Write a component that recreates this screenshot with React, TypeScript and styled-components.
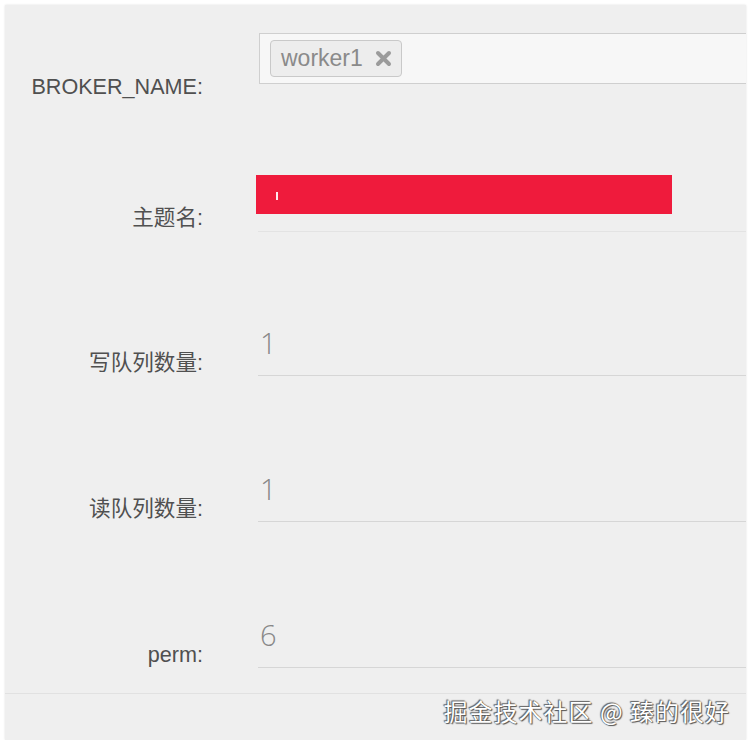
import React from "react";
import styled, { createGlobalStyle } from "styled-components";

const GlobalStyle = createGlobalStyle`
  html, body {
    margin: 0;
    padding: 0;
    background: #ffffff;
  }
  body {
    font-family: "Liberation Sans", "Noto Sans CJK SC", Arial, sans-serif;
  }
`;

const Panel = styled.div`
  margin: 5px 5px 0 5px;
  width: 741px;
  height: 735px;
  background: #efefef;
  box-shadow: 0 0 2px rgba(0, 0, 0, 0.12);
  display: flex;
  flex-direction: column;
  overflow: hidden;
`;

const Form = styled.div`
  display: flex;
  flex-direction: column;
`;

const Row = styled.div<{ $top: number; $align: "start" | "end" }>`
  display: flex;
  margin-top: ${({ $top }) => $top}px;
  align-items: ${({ $align }) => ($align === "start" ? "flex-start" : "flex-end")};
`;

const Label = styled.label<{ $offset: number; $fromTop?: boolean }>`
  flex: 0 0 253px;
  box-sizing: border-box;
  padding-right: 55px;
  text-align: right;
  font-size: 21.6px;
  line-height: 22px;
  color: #505050;
  ${({ $offset, $fromTop }) =>
    $fromTop ? `margin-top: ${$offset}px;` : `margin-bottom: ${$offset}px;`}
`;

const TagInput = styled.div`
  flex: 1;
  height: 51px;
  box-sizing: border-box;
  margin-left: 1px;
  border: 1px solid #cfcfcf;
  border-right: none;
  background: #f7f7f7;
  display: flex;
  align-items: center;
  padding-left: 10px;
`;

const Tag = styled.span`
  display: inline-flex;
  align-items: center;
  gap: 12px;
  height: 37px;
  box-sizing: border-box;
  padding: 0 9px 0 10px;
  border: 1px solid #c9c9c9;
  border-radius: 4px;
  background: #ededed;
  font-size: 23px;
  color: #8a8a8a;
`;

const TopicField = styled.div`
  flex: 1;
  height: 56px;
  border-bottom: 1px solid #e3e3e3;
`;

const Redacted = styled.div`
  width: 416px;
  height: 39px;
  margin-left: -2px;
  background: #ef1b3c;
  display: flex;
  align-items: center;
  padding-left: 20px;
  box-sizing: border-box;
`;

const Caret = styled.span`
  display: block;
  width: 2px;
  height: 8px;
  margin-top: 3px;
  background: #ffe8ec;
`;

const NumberField = styled.div`
  flex: 1;
  height: 53px;
  box-sizing: border-box;
  padding: 4px 0 0 2px;
  border-bottom: 1px solid #d6d6d6;
  font-family: "Open Sans", "Liberation Sans", sans-serif;
  font-weight: 300;
  font-size: 29px;
  line-height: 32px;
  color: #888888;
`;

const Footer = styled.div`
  margin-top: auto;
  height: 47px;
  box-sizing: border-box;
  border-top: 1px solid #e1e1e1;
  display: flex;
  justify-content: flex-end;
  align-items: flex-start;
  padding: 2px 16px 0 0;
`;

const Watermark = styled.span`
  font-family: "Noto Sans CJK SC", sans-serif;
  font-size: 24px;
  line-height: 30px;
  color: #ffffff;
  text-shadow: 0 0 1px #444, 1px 1px 1px #555, -1px -1px 1px #666;
  letter-spacing: 1px;
`;

const RemoveIcon = () => (
  <svg width="17" height="17" viewBox="0 0 17 17">
    <path
      d="M3 3 L14 14 M14 3 L3 14"
      stroke="#9b9b9b"
      strokeWidth="4"
      strokeLinecap="round"
    />
  </svg>
);

const numberRows = [
  { label: "写队列数量:", value: "1", top: 91 },
  { label: "读队列数量:", value: "1", top: 93 },
  { label: "perm:", value: "6", top: 93 },
];

export default function App() {
  return (
    <>
      <GlobalStyle />
      <Panel>
        <Form>
          <Row $top={28} $align="start">
            <Label $offset={43} $fromTop>
              BROKER_NAME:
            </Label>
            <TagInput>
              <Tag>
                worker1
                <RemoveIcon />
              </Tag>
            </TagInput>
          </Row>
          <Row $top={77} $align="end">
            <Label $offset={3}>主题名:</Label>
            <TopicField>
              <Redacted>
                <Caret />
              </Redacted>
            </TopicField>
          </Row>
          {numberRows.map((row) => (
            <Row key={row.label} $top={row.top} $align="end">
              <Label $offset={2}>{row.label}</Label>
              <NumberField>{row.value}</NumberField>
            </Row>
          ))}
        </Form>
        <Footer>
          <Watermark>掘金技术社区 @ 臻的很好</Watermark>
        </Footer>
      </Panel>
    </>
  );
}
